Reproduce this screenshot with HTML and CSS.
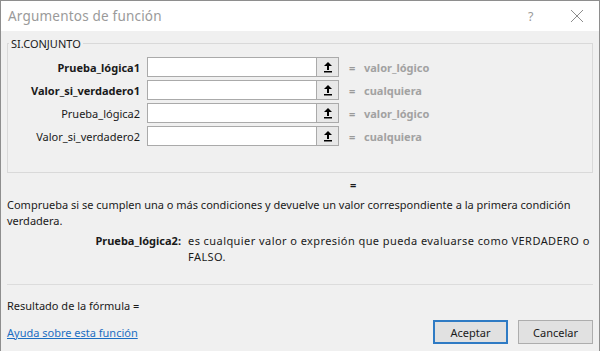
FILE: index.html
```html
<!DOCTYPE html>
<html lang="es">
<head>
<meta charset="utf-8">
<link rel="stylesheet" href="styles.css">
</head>
<body>
<div class="window">
  <div class="titlebar">
    <span class="title">Argumentos de función</span>
    <span class="help">?</span>
    <span class="close">
      <svg width="14" height="14" viewBox="0 0 14 14"><path d="M1 1 L13 13 M13 1 L1 13" stroke="#8c8c8c" stroke-width="1" fill="none"/></svg>
    </span>
  </div>
  <div class="content">
    <fieldset class="group">
      <legend>SI.CONJUNTO</legend>
      <div class="args">
        <div class="row">
          <span class="label bold">Prueba_lógica1</span>
          <span class="input"></span>
          <span class="ref"><svg width="10" height="12" viewBox="0 0 10 12"><path d="M5 1 L1 5 L4 5 L4 9 L6 9 L6 5 L9 5 Z" fill="#000"/><rect x="1" y="10" width="8" height="1.5" fill="#000"/></svg></span>
          <span class="eq">=</span>
          <span class="val">valor_lógico</span>
        </div>
        <div class="row">
          <span class="label bold">Valor_si_verdadero1</span>
          <span class="input"></span>
          <span class="ref"><svg width="10" height="12" viewBox="0 0 10 12"><path d="M5 1 L1 5 L4 5 L4 9 L6 9 L6 5 L9 5 Z" fill="#000"/><rect x="1" y="10" width="8" height="1.5" fill="#000"/></svg></span>
          <span class="eq">=</span>
          <span class="val">cualquiera</span>
        </div>
        <div class="row">
          <span class="label">Prueba_lógica2</span>
          <span class="input"></span>
          <span class="ref"><svg width="10" height="12" viewBox="0 0 10 12"><path d="M5 1 L1 5 L4 5 L4 9 L6 9 L6 5 L9 5 Z" fill="#000"/><rect x="1" y="10" width="8" height="1.5" fill="#000"/></svg></span>
          <span class="eq">=</span>
          <span class="val">valor_lógico</span>
        </div>
        <div class="row">
          <span class="label">Valor_si_verdadero2</span>
          <span class="input"></span>
          <span class="ref"><svg width="10" height="12" viewBox="0 0 10 12"><path d="M5 1 L1 5 L4 5 L4 9 L6 9 L6 5 L9 5 Z" fill="#000"/><rect x="1" y="10" width="8" height="1.5" fill="#000"/></svg></span>
          <span class="eq">=</span>
          <span class="val">cualquiera</span>
        </div>
      </div>
    </fieldset>
    <div class="result-eq">=</div>
    <p class="desc">Comprueba si se cumplen una o más condiciones y devuelve un valor correspondiente a la primera condición verdadera.</p>
    <div class="argdesc">
      <span class="argname">Prueba_lógica2:</span>
      <span class="argtext">es cualquier valor o expresión que pueda evaluarse como VERDADERO o FALSO.</span>
    </div>
    <div class="sep"></div>
    <div class="formula">Resultado de la fórmula =</div>
    <div class="footer">
      <a class="link" href="#">Ayuda sobre esta función</a>
      <div class="buttons">
        <button class="btn primary">Aceptar</button>
        <button class="btn">Cancelar</button>
      </div>
    </div>
  </div>
</div>
</body>
</html>
```
FILE: styles.css
```css
* { box-sizing: border-box; }
html, body { margin: 0; padding: 0; }
body {
  width: 600px;
  height: 351px;
  overflow: hidden;
  font-family: "Noto Sans", "Open Sans", sans-serif;
  font-size: 11px;
  color: #1a1a1a;
  background: #f0f0f0;
}
.window {
  width: 600px;
  height: 351px;
  border: 1px solid #8e8e8e;
  border-bottom: none;
  background: #f0f0f0;
  display: flex;
  flex-direction: column;
}
.titlebar {
  height: 30px;
  background: #fff;
  display: flex;
  align-items: center;
  padding-left: 7px;
  flex: none;
}
.title {
  font-size: 13.5px;
  letter-spacing: 0.2px;
  color: #9a9a9a;
  flex: 1;
}
.help {
  color: #9a9a9a;
  font-size: 12.5px;
  width: 14px;
  margin-right: 28px;
}
.close {
  width: 14px;
  height: 14px;
  margin-right: 15px;
  display: flex;
}
.content {
  flex: 1;
  padding: 0 6px;
  display: flex;
  flex-direction: column;
}
.group {
  margin: 5px 0 0 0;
  padding: 6px 0 0 0;
  border: 1px solid #d9d9d9;
  height: 137px;
}
.group legend {
  padding: 0 2px;
  margin-left: 1px;
  font-size: 11px;
  color: #1a1a1a;
}
.args {
  display: flex;
  flex-direction: column;
  gap: 3px;
}
.row {
  display: flex;
  align-items: center;
  height: 20px;
}
.label {
  width: 139px;
  text-align: right;
  padding-right: 7px;
  flex: none;
}
.bold { font-weight: bold; }
.input {
  width: 170px;
  height: 20px;
  background: #fff;
  border: 1px solid #aaa;
  flex: none;
}
.ref {
  width: 22px;
  height: 20px;
  border: 1px solid #aaa;
  border-left: none;
  background: #e8e8e8;
  display: flex;
  align-items: center;
  justify-content: center;
  flex: none;
}
.eq {
  margin-left: 10px;
  color: #9a9a9a;
  font-weight: bold;
  width: 15px;
}
.val {
  color: #a2a2a2;
  font-weight: bold;
}
.result-eq {
  margin-left: 343px;
  height: 16px;
  line-height: 16px;
  margin-top: 4px;
  font-weight: bold;
}
.desc {
  margin: 4px 0 0 0;
  line-height: 16px;
}
.argdesc {
  display: flex;
  margin-top: 4px;
  line-height: 16px;
}
.argname {
  width: 181px;
  padding-right: 7px;
  text-align: right;
  font-weight: bold;
  flex: none;
}
.argtext {
  width: 404px;
  letter-spacing: 0.43px;
}
.sep {
  height: 1px;
  background: #dcdcdc;
  margin-top: 19px;
}
.formula {
  margin-top: 13px;
  line-height: 16px;
}
.footer {
  display: flex;
  align-items: center;
  justify-content: space-between;
  margin-top: 6px;
}
.link {
  color: #1c6ec2;
  text-decoration: underline;
}
.buttons {
  display: flex;
  gap: 10px;
}
.btn {
  font-family: inherit;
  font-size: 11px;
  color: #1a1a1a;
  width: 75px;
  height: 24px;
  background: #e1e1e1;
  border: 1px solid #adadad;
  padding: 0;
}
.btn.primary {
  border: 2px solid #2f7bc4;
}
```
